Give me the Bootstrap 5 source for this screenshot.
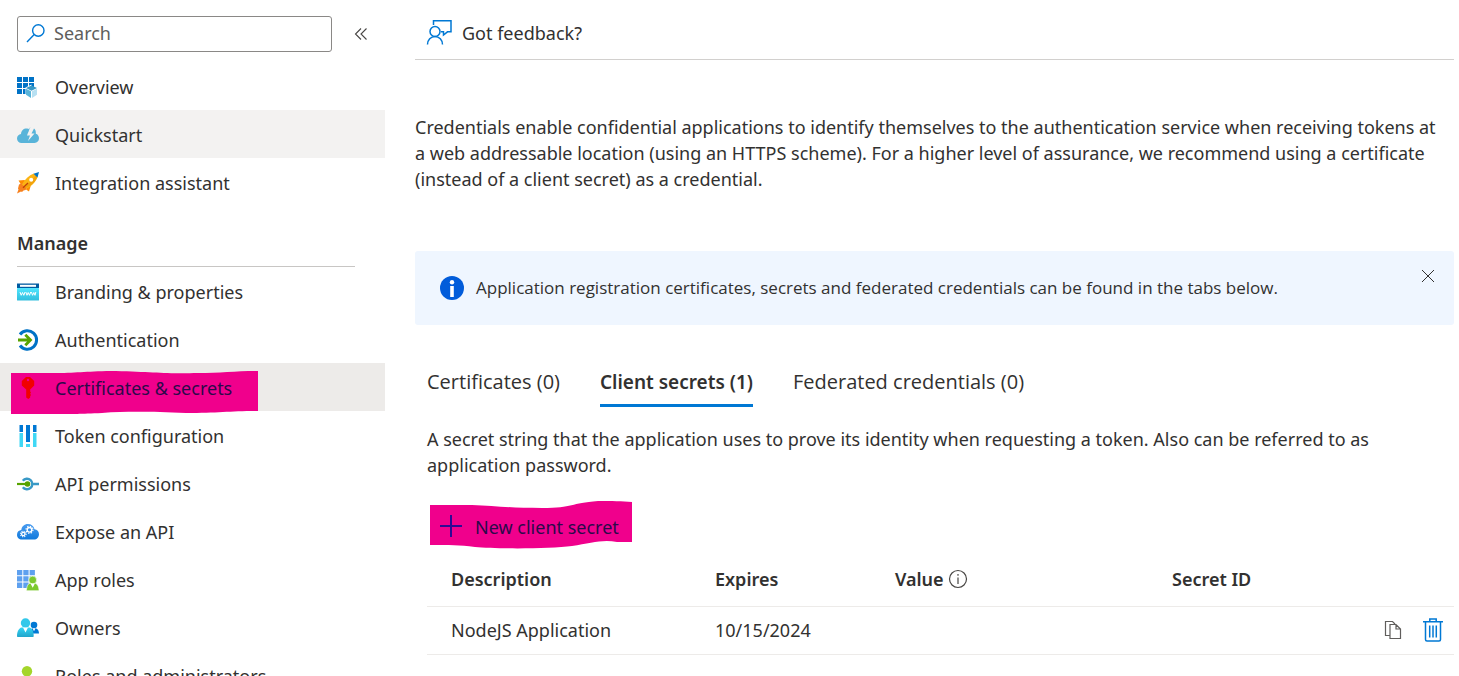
<!DOCTYPE html>
<html lang="en">
<head>
<meta charset="utf-8">
<meta name="viewport" content="width=device-width, initial-scale=1">
<title>Certificates &amp; secrets</title>
<link href="https://cdn.jsdelivr.net/npm/bootstrap@5.3.0/dist/css/bootstrap.min.css" rel="stylesheet">
<style>
  body { font-family: "Noto Sans", "Open Sans", sans-serif; font-size: 18px; line-height: 26px; color: #323130; background: #fff; }
  svg { display: block; flex-shrink: 0; }
  .side-pane { width: 385px; }
  .side-top { height: 62px; padding: 15px 17px 10px; gap: 22px; }
  .search-box { width: 315px; height: 36px; border: 1px solid #8a8886; border-radius: 3px; padding: 0 8px 2px; gap: 8px; }
  .search-box input { font-size: 18px; line-height: 26px; color: #323130; }
  .search-box input::placeholder { color: #605e5c; opacity: 1; }
  .side-link { height: 48px; padding: 2px 17px 0; gap: 16px; color: #323130; position: relative; }
  .side-link > * { position: relative; }
  .side-link.soft { background: #f3f2f1; }
  .side-link.current { background: #edebe9; color: #2b0a4a; }
  .side-head { font-size: 18px; font-weight: 600; line-height: 26px; margin: 24px 30px 0 17px; padding-bottom: 10px; border-bottom: 1px solid #c8c6c4; }
  .side-link > .marker { position: absolute; left: 10px; top: 7px; }
  .main-pane { padding: 0 5px 0 30px; }
  .command-bar { height: 60px; border-bottom: 1px solid #d2d0ce; padding: 7px 11px 0; }
  .plain-btn { border: 0; background: none; padding: 0; color: inherit; }
  .feedback-btn { gap: 10px; }
  .intro { margin: 54px 0 59px; }
  .info-bar { background: #eff6ff; border-radius: 3px; min-height: 74px; padding: 0 19px 0 25px; gap: 12px; font-family: "Open Sans", "Noto Sans", sans-serif; font-size: 17px; }
  .secret-tabs { gap: 40px; padding: 44px 12px 0; font-family: "Open Sans", "Noto Sans", sans-serif; font-size: 20px; }
  .secret-tabs .tab-btn { border: 0; border-bottom: 3px solid transparent; background: none; padding: 0 0 9px; color: inherit; }
  .secret-tabs .tab-btn.active { font-family: "Noto Sans", "Open Sans", sans-serif; font-size: 19px; font-weight: 600; border-color: #0078d4; }
  .tab-body { padding: 19px 0 0 12px; }
  .new-secret { position: relative; height: 50px; margin: 22px 0 3px 3px; padding: 4px 10px 0 9px; gap: 12px; color: #2b0a4a; }
  .new-secret > * { position: relative; }
  .new-secret > .marker { position: absolute; left: 0; top: 0; }
  .secret-table { table-layout: fixed; width: 100%; margin: 0; }
  .secret-table th, .secret-table td { padding: 0 24px; border-bottom: 1px solid #edebe9; vertical-align: middle; }
  .secret-table th { height: 53px; font-weight: 600; }
  .secret-table td { height: 48px; }
  .secret-table td:last-child { padding-right: 11px; }
  .row-tools { gap: 21px; }
  .c-desc { width: 264px; } .c-exp { width: 180px; } .c-val { width: 277px; }
</style>
</head>
<body>
<div class="d-flex vh-100 overflow-hidden">
  <nav class="side-pane flex-shrink-0 overflow-hidden" aria-label="Resource menu">
    <div class="side-top d-flex align-items-center">
      <label class="search-box d-flex align-items-center">
        <svg width="20" height="20" viewBox="0 0 20 20" fill="none" stroke="#0078d4" stroke-width="1.4"><circle cx="12.3" cy="7.500" r="5.7"/><path d="M8.2 11.500 1 19"/></svg>
        <input class="border-0 p-0 flex-grow-1 bg-transparent" type="text" placeholder="Search" aria-label="Search">
      </label>
      <button class="plain-btn" type="button" aria-label="Collapse menu">
        <svg width="14" height="14" viewBox="0 0 14 14" fill="none" stroke="#484644" stroke-width="1.1"><path d="M7 1.5 1.5 7 7 12.5M12.5 1.5 7 7l5.5 5.500"/></svg>
      </button>
    </div>

    <a class="side-link d-flex align-items-center text-decoration-none" href="#">
      <svg width="22" height="22" viewBox="0 0 22 22"><path fill="#0072c6" d="M0 1h5v5H0zM6 1h5v5H6zM12 1h5v5h-5zM0 7h5v5H0zM6 7h5v5H6zM12 7h5v5h-5zM0 13h5v5H0zM6 13h5v5H6z"/><path fill="#fff" d="M14.500 8.500 8.500 11.500v7l6 3.500z"/><path fill="#3999c6" d="m14.500 9.500 5.500 2.500-5.500 2.700L9 12z"/><path fill="#59b4d9" d="m9 12.700 5 2.500V22l-5-3.300z"/><path fill="#b7e0f2" d="m20 12.700-5 2.500V22l5-3.300z"/></svg>
      <span>Overview</span></a>
    <a class="side-link soft d-flex align-items-center text-decoration-none" href="#">
      <svg width="22" height="22" viewBox="0 0 22 22"><path fill="#59b4d9" d="M4.500 19A4.400 4.400 0 0 1 0 14.600c0-2.500 1.800-4.200 4-4.500C4.300 6.500 6.500 4.500 9.500 4.500c1.200 0 2 .4 2.700 1L10 11.500h3l-2 5.500 6.500-7.500h-3L17 4.500c1.500 1.200 2 3 1.800 5.200 2 .5 3.200 2.300 3.200 4.600 0 2.700-1.800 4.700-4.500 4.700z"/><path fill="#59b4d9" d="m13.500 3-2.500 5.500-1-2z" opacity=".6"/></svg>
      <span>Quickstart</span></a>
    <a class="side-link d-flex align-items-center text-decoration-none" href="#">
      <svg width="22" height="22" viewBox="0 0 22 22"><path fill="#ff8c00" d="M1.500 8.500 7.500 8l1 1.500-4 4zM12 19.500l2-6.500-1.500-.5-3.500 5z"/><path fill="#f7811e" d="M2 12.500 7.500 10l4 4.500L8.500 18l-2 .5L5 20l-1-.5-4 2 1.500-4-.5-1z"/><path fill="#fcb414" d="M5 12.500C8 7 12.500 3 17 1.500l3.500 3.500c-1.500 4.500-5.500 9-11 11.500z"/><path fill="#e08a00" d="M6 17c6-2 12-6 14.500-12l-1.500-1.500z" opacity=".4"/><path fill="#0072c6" d="m16.500 1.800 5.500-1.800-1.500 5.500z"/><circle cx="14.200" cy="7.800" r="2" fill="#fff"/><path stroke="#c0400a" stroke-width="1.300" d="m6 15.800 5-4.800"/></svg>
      <span>Integration assistant</span></a>

    <h2 class="side-head">Manage</h2>

    <a class="side-link d-flex align-items-center text-decoration-none" href="#">
      <svg width="22" height="22" viewBox="0 0 22 22"><defs><linearGradient id="g-www" x1="0" y1="0" x2="0" y2="1"><stop offset="0" stop-color="#50e6ff"/><stop offset="1" stop-color="#32bedd"/></linearGradient></defs><rect y="7" width="22" height="12.500" rx=".6" fill="url(#g-www)"/><path fill="#005ba1" d="M0 2.500h22V7H0z"/><rect x="3" y="3.800" width="16" height="2" fill="#fff"/><path fill="none" stroke="#fff" stroke-width="1" d="m3 11 1.200 3.300L5.500 11.500l1.300 2.800L8 11m.8 0 1.200 3.300 1.200-2.800 1.300 2.800 1.200-3.300m.7 0 1.200 3.300 1.200-2.800 1.200 2.800L18.800 11"/></svg>
      <span>Branding &amp; properties</span></a>
    <a class="side-link d-flex align-items-center text-decoration-none" href="#">
      <svg width="22" height="22" viewBox="0 0 22 22" fill="none"><path stroke="#0072c6" stroke-width="3" d="M3 5.500a9.200 9.200 0 1 1 0 11"/><path stroke="#57a300" stroke-width="2.800" d="M1 11h12M8.300 5.800 13.500 11l-5.200 5.200"/></svg>
      <span>Authentication</span></a>
    <a class="side-link current d-flex align-items-center text-decoration-none" href="#" aria-current="page">
      <svg class="marker" width="249" height="46" viewBox="0 0 249 46"><path fill="#f0008c" d="M1 3h46C68 3 78 1 106 1c38 1 52 3 82 2 22 0 38-2 60-2v40c-28 0-40 2-72 2-32-1-55-2-84 0-22 1-30 1-42 1H1z"/></svg>
      <svg width="22" height="22" viewBox="0 0 22 22"><path fill="#f10000" fill-rule="evenodd" d="M9 0h4l4.200 4v4.500L13.200 12.500v2l.8 1-.8 1.200.8 1.300-.8 1.300V20.500L11.300 22 9.200 20.500v-8L4.800 8.500V4zM11 1.800a1.200 1.200 0 1 0 0 2.400 1.200 1.200 0 0 0 0-2.400z"/></svg>
      <span>Certificates &amp; secrets</span></a>
    <a class="side-link d-flex align-items-center text-decoration-none" href="#">
      <svg width="22" height="22" viewBox="0 0 22 22"><path fill="#0078d4" d="M2.500 0H6v7H2.500zM9 0h4v17H9zM16 0h3.500v7H16z"/><path fill="#40d8f5" d="M2.500 8H6v14H2.500zM9 19h4v3H9zM16 8h3.500v14H16z"/></svg>
      <span>Token configuration</span></a>
    <a class="side-link d-flex align-items-center text-decoration-none" href="#">
      <svg width="22" height="22" viewBox="0 0 22 22" fill="none"><path stroke="#3999c6" stroke-width="2.400" d="M5.800 7.800a5.300 5.300 0 1 1 0 6.400M15.800 11H22"/><path stroke="#57a300" stroke-width="2.200" d="M0 11h10"/><circle cx="10.500" cy="11" r="2.800" fill="#57a300"/></svg>
      <span>API permissions</span></a>
    <a class="side-link d-flex align-items-center text-decoration-none" href="#">
      <svg width="22" height="22" viewBox="0 0 22 22" fill="none"><defs><linearGradient id="g-cloud" x1="0" y1="0" x2="0" y2="1"><stop offset="0" stop-color="#4a9cf0"/><stop offset="1" stop-color="#1079dc"/></linearGradient></defs><path fill="url(#g-cloud)" d="M5 18.500c-3 0-5-2-5-4.800S2 9.200 4.300 9c.4-3.500 3-6 6.600-6 3.300 0 5.900 2 6.600 5.200 2.600.3 4.500 2.300 4.500 5 0 3-2.200 5.300-5 5.300z"/><g stroke="#fff"><circle cx="12.500" cy="8.800" r="2.300" stroke-width="1.400"/><circle cx="12.500" cy="8.800" r="3.500" stroke-width="1.200" stroke-dasharray="1.370 1.370"/><circle cx="6.300" cy="13" r="1.700" stroke-width="1.300"/><circle cx="6.300" cy="13" r="2.800" stroke-width="1.100" stroke-dasharray="1.100 1.100"/></g></svg>
      <span>Expose an API</span></a>
    <a class="side-link d-flex align-items-center text-decoration-none" href="#">
      <svg width="22" height="22" viewBox="0 0 22 22"><path fill="#5ea0ef" d="M0 1h5.300v5.300H0zM6.300 1h5.300v5.300H6.300zM12.600 1h5.300v5.300h-5.300zM0 7.300h5.300v5.300H0zM6.300 7.300h5.300v5.300H6.300zM12.600 7.300h5.300v5.300h-5.300zM0 13.600h5.300v5.300H0zM6.300 13.600h5.300v5.300H6.300z"/><g fill="#7cc92f" stroke="#fff" stroke-width=".6"><path d="M9.500 21.700c0-4.200 1.500-7 3.500-7.500h5c2.200.5 4 3.300 4 7.500z"/><circle cx="15.700" cy="11" r="3.900"/></g><path fill="#fff" d="M13.500 14.500h4.400l-2.200 4.300z"/></svg>
      <span>App roles</span></a>
    <a class="side-link d-flex align-items-center text-decoration-none" href="#">
      <svg width="22" height="22" viewBox="0 0 22 22"><defs><linearGradient id="g-own" x1="0" y1="0" x2="0" y2="1"><stop offset="0" stop-color="#32d4f5"/><stop offset="1" stop-color="#22a5cb"/></linearGradient></defs><path fill="#0078d4" d="M13 16.500c0-3.500 1-5 2.500-5.300h3.300c2 .4 3.200 2.800 3.200 5.300z"/><circle cx="17" cy="8" r="3.300" fill="#0078d4"/><path fill="#fff" d="m15.500 11.300 1.500 3 1.500-3z"/><path fill="url(#g-own)" d="M0 19c0-4.500 2-8 4.500-8.500h8c2.500.5 4.200 4 4.200 8.500 0 .6-.3 1-1 1H1c-.7 0-1-.4-1-1z"/><circle cx="8.500" cy="6" r="4.700" fill="#32c8ea"/><path fill="#fff" d="M6 10.500h5l-2.500 5z"/></svg>
      <span>Owners</span></a>
    <a class="side-link d-flex align-items-center text-decoration-none" href="#">
      <svg width="22" height="22" viewBox="0 0 22 22"><path fill="#76bc2d" d="M1 21c0-6 2-9.500 5-10h8c3 .5 5 4 5 10z"/><circle cx="10" cy="6.200" r="5.200" fill="#a4d52b"/><path fill="#fff" d="M7.500 11h5L10 15z"/></svg>
      <span>Roles and administrators</span></a>
  </nav>

  <main class="main-pane flex-grow-1">
    <div class="command-bar d-flex align-items-center">
      <button class="plain-btn feedback-btn d-flex align-items-center" type="button">
        <svg width="26" height="26" viewBox="0 0 26 26" fill="none" stroke="#0078d4" stroke-width="1.500"><circle cx="9" cy="11.500" r="5"/><path d="M1.500 24.500c0-4.500 3.300-8 7.500-8s7.500 3.500 7.500 8M7.500 5V.8H25v11h-3.500L17.500 15v-3.200H15"/></svg>
        <span>Got feedback?</span>
      </button>
    </div>

    <p class="intro pe-3">Credentials enable confidential applications to identify themselves to the authentication service when receiving tokens at a web addressable location (using an HTTPS scheme). For a higher level of assurance, we recommend using a certificate (instead of a client secret) as a credential.</p>

    <div class="info-bar d-flex align-items-center" role="status">
      <svg width="24" height="24" viewBox="0 0 24 24"><circle cx="12" cy="12" r="12" fill="#015cda"/><circle cx="12" cy="6.200" r="2.200" fill="#fff"/><path fill="#fff" d="M10.200 10h3.600v11h-3.600z"/></svg>
      <span class="flex-grow-1">Application registration certificates, secrets and federated credentials can be found in the tabs below.</span>
      <button class="plain-btn align-self-start pt-3" type="button" aria-label="Dismiss">
        <svg width="14" height="18" viewBox="0 0 14 18" stroke="#323130" stroke-width="1"><path d="m1 3 12 12M13 3 1 15"/></svg>
      </button>
    </div>

    <div class="secret-tabs d-flex" role="tablist">
      <button class="tab-btn" type="button" role="tab" aria-selected="false">Certificates (0)</button>
      <button class="tab-btn active" type="button" role="tab" aria-selected="true">Client secrets (1)</button>
      <button class="tab-btn" type="button" role="tab" aria-selected="false">Federated credentials (0)</button>
    </div>

    <section class="tab-body" role="tabpanel">
      <p class="m-0 pe-5">A secret string that the application uses to prove its identity when requesting a token. Also can be referred to as application password.</p>
      <button class="plain-btn new-secret d-inline-flex align-items-center" type="button">
        <svg class="marker" width="202" height="50" viewBox="0 0 202 50"><path fill="#f0008c" d="M0 5h42c24 1 40 3 70 3C144 8 140 3 168 1c14 0 24 0 34 1v40h-15c-14-3-26 1-45 4-22 3-76 3-97 1-16-2-25-2-45-2z"/></svg>
        <svg width="24" height="24" viewBox="0 0 24 24" stroke="#2d0a94" stroke-width="2"><path d="M12 0v22M1 11h22"/></svg>
        <span>New client secret</span>
      </button>
      <table class="secret-table">
        <colgroup><col class="c-desc"><col class="c-exp"><col class="c-val"><col></colgroup>
        <thead>
          <tr>
            <th scope="col">Description</th>
            <th scope="col">Expires</th>
            <th scope="col"><div class="d-flex align-items-center gap-1">Value
              <svg width="20" height="20" viewBox="0 0 20 20" fill="none" stroke="#484644" stroke-width="1.200"><circle cx="10" cy="10" r="8.500"/><path d="M10 8.500V15M10 5v1.800"/></svg></div></th>
            <th scope="col">Secret ID</th>
          </tr>
        </thead>
        <tbody>
          <tr>
            <td>NodeJS Application</td>
            <td>10/15/2024</td>
            <td></td>
            <td><div class="row-tools d-flex justify-content-end align-items-center">
              <button class="plain-btn" type="button" aria-label="Copy"><svg width="18" height="20" viewBox="0 0 18 20" fill="none" stroke="#605e5c" stroke-width="1.200"><path d="M6 15.500H1.500V1.500h7L11 4M6 4.500h6l4.500 4.500v9.500H6zM12 4.500V9h4.500"/></svg></button>
              <button class="plain-btn" type="button" aria-label="Delete"><svg width="20" height="24" viewBox="0 0 20 24" fill="none" stroke="#0078d4" stroke-width="1.500"><path d="M0 3.800h20M6.800 3.500V1h6.400v2.500M2.500 4v17.500c0 1 .5 1.500 1.500 1.500h12c1 0 1.500-.5 1.500-1.500V4M6.700 7.500v12M10 7.500v12M13.300 7.500v12"/></svg></button>
            </div></td>
          </tr>
        </tbody>
      </table>
    </section>
  </main>
</div>
<script src="https://cdn.jsdelivr.net/npm/bootstrap@5.3.0/dist/js/bootstrap.bundle.min.js"></script>
</body>
</html>
